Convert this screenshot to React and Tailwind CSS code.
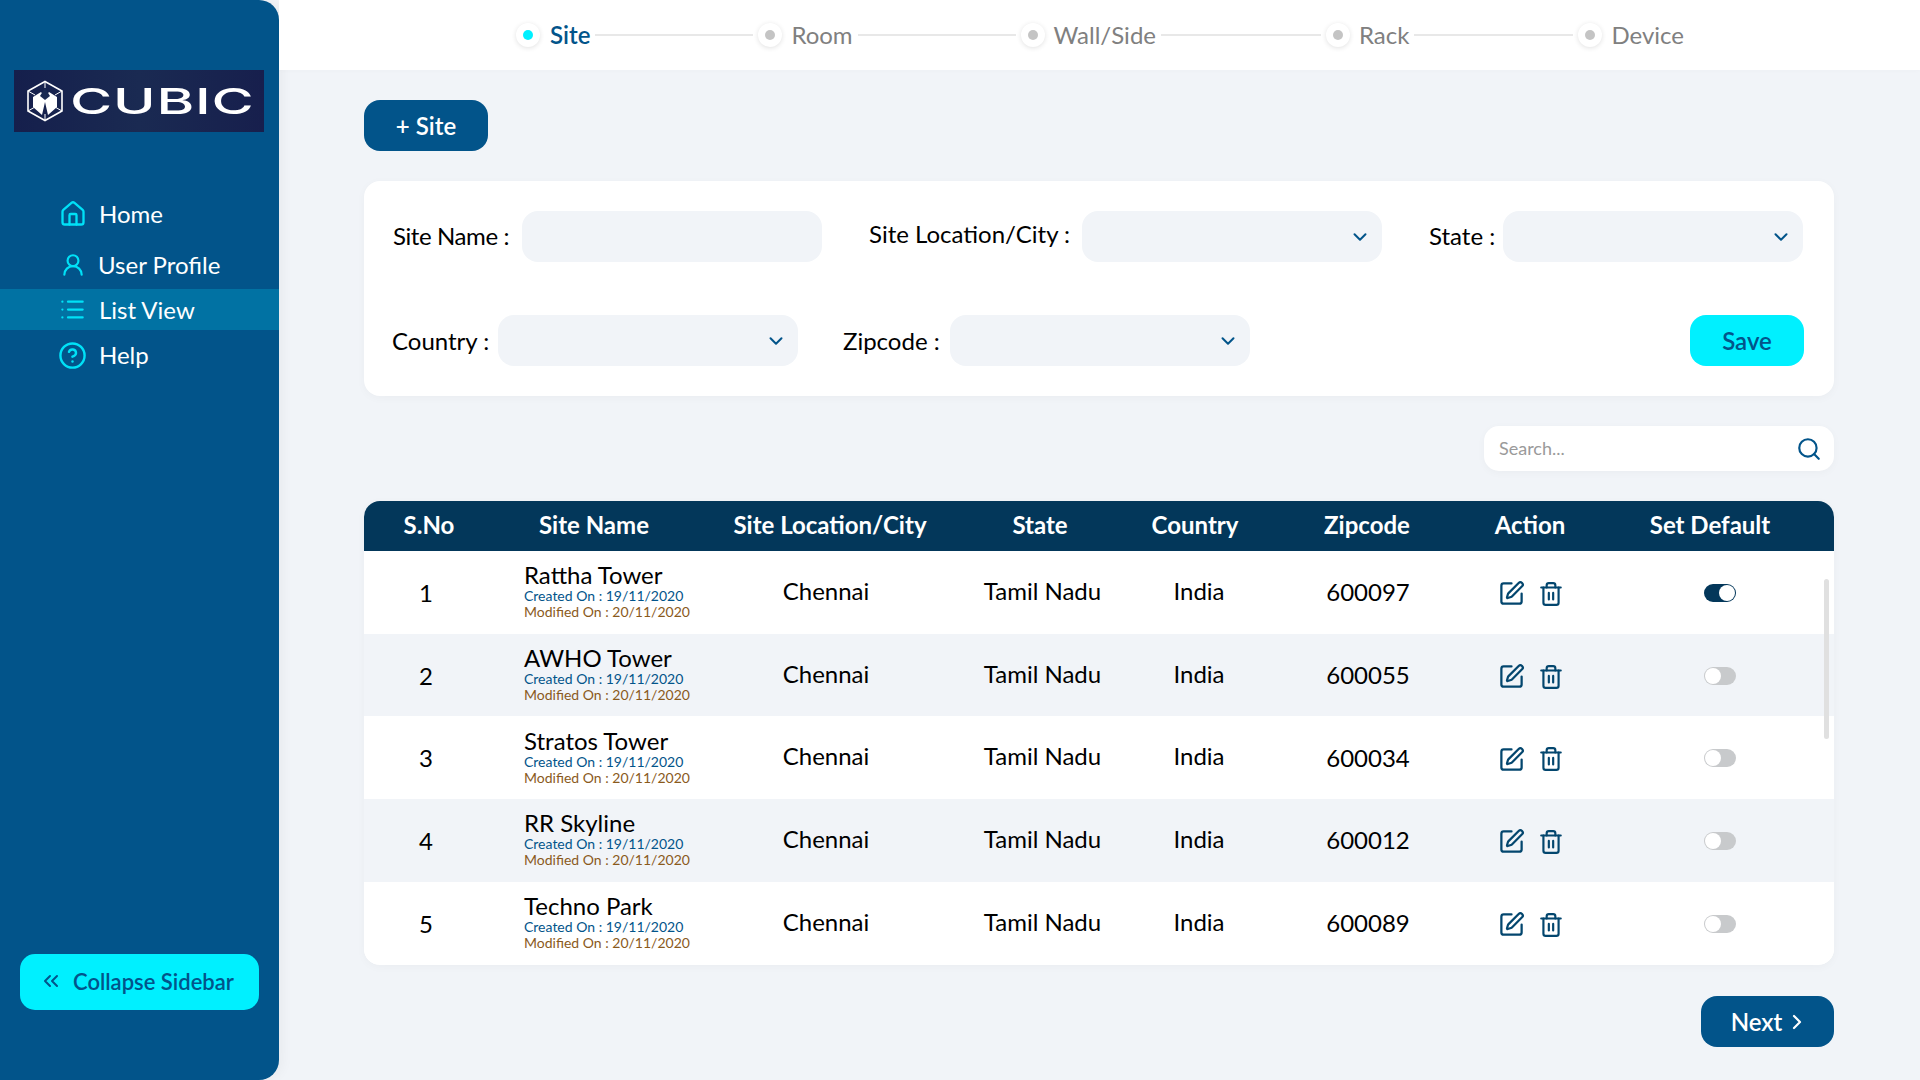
import React from "react";
import { House, UserRound, List, CircleHelp, ChevronsLeft, ChevronDown, ChevronRight, Search, SquarePen, Trash2 } from "lucide-react";

const steps = [
  { label: "Site", active: true, line: "" },
  { label: "Room", line: "w-[158px]" },
  { label: "Wall/Side", line: "w-[158px]" },
  { label: "Rack", line: "w-[160px]" },
  { label: "Device", line: "w-[159px]" },
];

const rows = [
  ["1", "Rattha Tower", "600097", true],
  ["2", "AWHO Tower", "600055", false],
  ["3", "Stratos Tower", "600034", false],
  ["4", "RR Skyline", "600012", false],
  ["5", "Techno Park", "600089", false],
];

function Logo() {
  return (
    <div className="mx-[14px] mt-[70px] h-[62px] w-[250px] flex items-center overflow-hidden bg-gradient-to-r from-[#151f4c] via-[#1a2a52] to-[#171f4d] pl-[12px] blur-[0.4px]">
      <svg width="38" height="42" viewBox="0 0 38 42" fill="none" stroke="#ffffff" strokeWidth="1.6" className="shrink-0">
        <path d="M19 1.5 L36 11 V31 L19 40.5 L2 31 V11 Z" />
        <path d="M19 1.5 V8 M2 11 L9 15 M36 11 L29 15 M2 31 L9 27 M36 31 L29 27 M19 40.5 V34" strokeWidth="1" />
        <path d="M7 17 L15 12 L19 17 L23 12 L31 17 L31 27 L22 35 L19 22 L16 35 L7 27 Z" fill="#ffffff" stroke="none" />
        <path d="M19 8 L24 16 L19 20 L14 16 Z" fill="#1a2a52" stroke="none" />
      </svg>
      <span className="ml-[6px] origin-left scale-x-[1.6] font-[family-name:Inter,sans-serif] text-[36px] font-medium leading-none text-white tracking-[0.5px]">CUBIC</span>
    </div>
  );
}

function NavItem({ icon, label, className, textClass }) {
  return (
    <div className={`flex items-center text-[24px] leading-none text-white ${className}`}>
      {icon}
      <span className={textClass}>{label}</span>
    </div>
  );
}

function Sidebar() {
  return (
    <aside className="flex h-[1080px] w-[279px] shrink-0 flex-col rounded-r-[20px] bg-[#02548a] shadow-[4px_0_12px_rgba(0,0,0,0.04)]">
      <Logo />
      <nav className="mt-[62px] flex flex-col">
        <NavItem className="h-[40px] pl-[59px]" textClass="ml-[12px]" label="Home" icon={<House size={28} strokeWidth={2} className="text-[#00e1f7]" />} />
        <NavItem className="mt-[11px] h-[40px] pl-[59px]" textClass="ml-[11px]" label="User Profile" icon={<UserRound size={26} strokeWidth={2} className="mx-[1px] text-[#00e1f7]" />} />
        <NavItem className="mt-[4px] h-[41px] bg-[#0172a3] pl-[59px]" textClass="ml-[13px]" label="List View" icon={<List size={27} strokeWidth={2} className="text-[#00e1f7]" />} />
        <NavItem className="mt-[5px] h-[40px] pl-[58px]" textClass="ml-[12px]" label="Help" icon={<CircleHelp size={29} strokeWidth={2} className="text-[#00e1f7]" />} />
      </nav>
      <button className="mx-[20px] mt-auto mb-[70px] flex h-[56px] w-[239px] items-center rounded-[15px] bg-[#00f0ff] pb-[2px] pl-[19px] text-[22px] font-semibold text-[#02548a]">
        <ChevronsLeft size={24} strokeWidth={2} />
        <span className="ml-[10px]">Collapse Sidebar</span>
      </button>
    </aside>
  );
}

function Stepper() {
  return (
    <header className="flex h-[70px] items-center bg-white pl-[237px] shadow-[0_1px_4px_rgba(0,0,0,0.02)]">
      {steps.map((s) => (
        <React.Fragment key={s.label}>
          {s.line && <div className={`mx-[5px] h-[2px] bg-[#e8e8e8] ${s.line}`} />}
          <div className="flex h-[24px] w-[24px] items-center justify-center rounded-full bg-white shadow-[0_1px_5px_rgba(0,0,0,0.12)]">
            <div className={`h-[10px] w-[10px] rounded-full ${s.active ? "bg-[#00f0ff]" : "bg-[#c4c4c4]"}`} />
          </div>
          <span className={`text-[24px] leading-none ${s.active ? "ml-[10px] font-semibold text-[#02548a]" : "ml-[9px] text-[#808080]"}`}>{s.label}</span>
        </React.Fragment>
      ))}
    </header>
  );
}

function Select() {
  return (
    <div className="flex h-[51px] w-[300px] shrink-0 items-center justify-end rounded-[16px] bg-[#f1f4f8] pr-[11px]">
      <ChevronDown size={22} strokeWidth={2.2} className="text-[#02548a]" />
    </div>
  );
}

function Form() {
  return (
    <section className="mt-[30px] h-[215px] rounded-[16px] bg-white pt-[30px] shadow-[0_2px_10px_rgba(0,0,0,0.03)]">
      <div className="flex h-[51px] items-center text-[24px] text-black">
        <label className="mb-[2px] ml-[29px] w-[129px] shrink-0 tracking-[-0.4px]">Site Name :</label>
        <input className="h-[51px] w-[300px] shrink-0 rounded-[16px] bg-[#f1f4f8] outline-none" />
        <label className="mb-[6px] ml-[47px] w-[213px] shrink-0">Site Location/City :</label>
        <Select />
        <label className="mb-[2px] ml-[47px] w-[74px] shrink-0">State :</label>
        <Select />
      </div>
      <div className="mt-[53px] flex h-[51px] items-center text-[24px] text-black">
        <label className="ml-[28px] w-[106px] shrink-0">Country :</label>
        <Select />
        <label className="ml-[45px] w-[107px] shrink-0">Zipcode :</label>
        <Select />
        <button className="mr-[30px] ml-auto h-[51px] w-[114px] rounded-[16px] bg-[#00f0ff] text-[24px] font-semibold text-[#02548a]">Save</button>
      </div>
    </section>
  );
}

function Toggle({ on }) {
  return (
    <div className={`flex h-[18px] w-[32px] items-center rounded-full ${on ? "justify-end bg-[#03375a] pr-[1px]" : "justify-start bg-[#c8cacc] pl-[1px]"}`}>
      <div className="h-[16px] w-[16px] rounded-full bg-white" />
    </div>
  );
}

function Table() {
  return (
    <section className="relative mt-[30px] overflow-hidden rounded-[16px] bg-white pb-[1px] shadow-[0_2px_10px_rgba(0,0,0,0.03)]">
      <div className="grid h-[50px] grid-cols-[130px_200px_272px_148px_162px_182px_144px_216px_16px] items-center bg-[#03375a] pb-[2px] text-center text-[24px] font-bold text-white">
        <div>S.No</div>
        <div>Site Name</div>
        <div>Site Location/City</div>
        <div>State</div>
        <div>Country</div>
        <div>Zipcode</div>
        <div>Action</div>
        <div>Set Default</div>
      </div>
      {rows.map(([n, name, zip, on], i) => (
        <div
          key={n}
          className={`grid h-[82.7px] grid-cols-[124px_232px_212px_220px_94px_244px_84px_260px] items-center text-center text-[24px] text-black ${i % 2 ? "bg-[#f1f4f8]" : "bg-white"}`}
        >
          <div className="mt-[1px]">{n}</div>
          <div className="pb-[1px] pl-[36px] text-left">
            <div className="text-[24px] leading-[24px] whitespace-nowrap">{name}</div>
            <div className="text-[14px] leading-[17px] whitespace-nowrap text-[#02548a]">Created On : 19/11/2020</div>
            <div className="text-[14px] leading-[16px] whitespace-nowrap text-[#8a5a1c]">Modified On : 20/11/2020</div>
          </div>
          <div className="-mt-[3px]">Chennai</div>
          <div className="-mt-[3px] pl-[1px]">Tamil Nadu</div>
          <div className="-mt-[3px]">India</div>
          <div>{zip}</div>
          <div className="mt-[3px] flex items-center justify-center gap-[13px] pr-[2px] text-[#03466e]">
            <SquarePen size={27} strokeWidth={2} />
            <Trash2 size={26} strokeWidth={2} />
          </div>
          <div className="mt-[1px] pl-[130px]"><Toggle on={on} /></div>
        </div>
      ))}
      <div className="absolute top-[78px] right-[5px] h-[160px] w-[5px] rounded-full bg-[#e0e0e0]" />
    </section>
  );
}

export default function App() {
  return (
    <div className="flex h-[1080px] w-[1920px] overflow-hidden bg-[#f1f4f8] font-[family-name:Lato,sans-serif]">
      <Sidebar />
      <main className="flex min-w-0 flex-1 flex-col">
        <Stepper />
        <div className="flex flex-col pr-[86px] pl-[85px]">
          <button className="mt-[30px] h-[51px] w-[124px] rounded-[16px] bg-[#02548a] text-[24px] font-semibold text-white">+ Site</button>
          <Form />
          <div className="mt-[30px] flex h-[45px] w-[350px] items-center self-end rounded-[15px] bg-white pr-[12px] pl-[15px] shadow-[0_2px_8px_rgba(0,0,0,0.03)]">
            <input placeholder="Search..." className="min-w-0 flex-1 text-[18px] outline-none placeholder:text-[#9a9a9a]" />
            <Search size={26} strokeWidth={2} className="text-[#02548a]" />
          </div>
          <Table />
          <button className="mt-[31px] flex h-[51px] w-[133px] items-center justify-center self-end rounded-[16px] bg-[#02548a] pl-[5px] text-[24px] font-semibold text-white">
            Next
            <ChevronRight size={24} strokeWidth={2.2} className="ml-[3px]" />
          </button>
        </div>
      </main>
    </div>
  );
}
